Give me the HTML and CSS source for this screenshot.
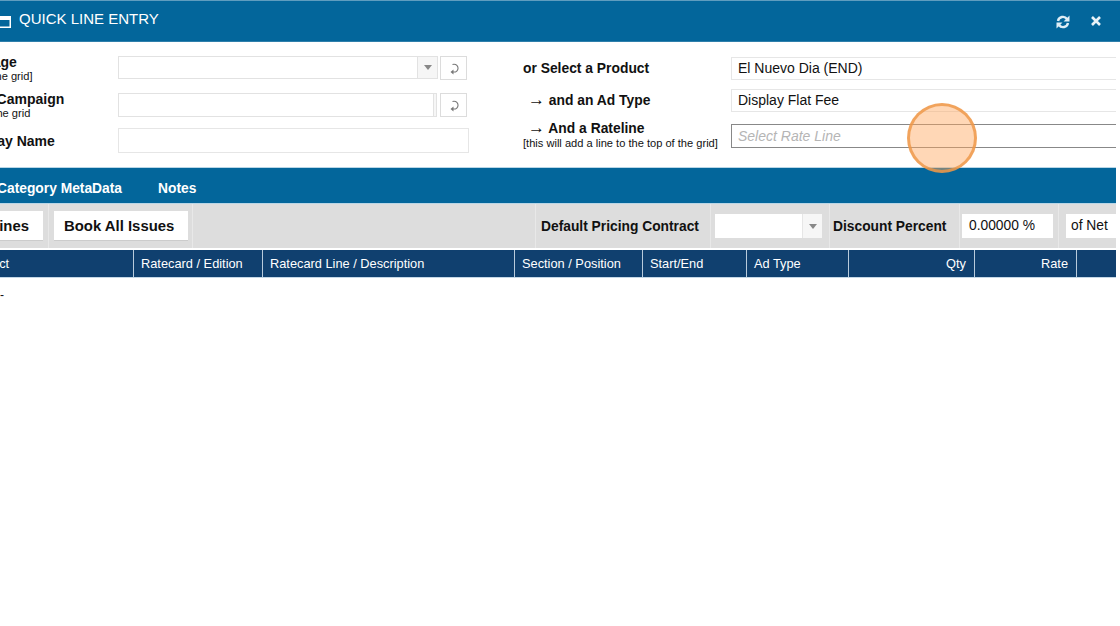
FILE: index.html
```html
<!DOCTYPE html>
<html lang="en">
<head>
<meta charset="utf-8">
<title>Quick Line Entry</title>
<link rel="stylesheet" href="styles.css">
</head>
<body>
<div class="window">
  <header class="titlebar">
    <svg class="win-icon" width="14" height="12" viewBox="0 0 14 12"><path fill="#fff" fill-rule="evenodd" d="M0 0h14v12H0zM1.500 4v6.500h11V4z"/></svg>
    <span class="title">QUICK LINE ENTRY</span>
    <span class="spacer"></span>
    <svg class="tool-refresh" width="14" height="14" viewBox="0 0 14 14"><path fill="none" stroke="#dfeef6" stroke-width="2.400" d="M2 6a5 5 0 0 1 9-2M12 8a5 5 0 0 1-9 2"/><path fill="#dfeef6" d="M13.500 .5v6h-6zM.5 13.500v-6h6z"/></svg>
    <svg class="tool-close" width="10" height="10" viewBox="0 0 10 10"><path stroke="#e8f2f8" stroke-width="2.600" d="M1 1l8 8M9 1l-8 8"/></svg>
  </header>

  <div class="panel">
    <section class="form">
      <div class="form-left">
        <div class="form-row row-one">
          <div class="label lab-package"><b>Package</b><small>[to the grid]</small></div>
          <div class="combo"><span class="combo-arrow"><i class="caret"></i></span></div>
          <button class="mini-btn"><svg width="12" height="13" viewBox="0 0 12 13"><path fill="none" stroke="#777" stroke-width="1.100" d="M3.500 2.500A4 4 0 1 1 6.500 10H4"/><path fill="#777" d="M4.500 7.500v5L1.500 10z"/></svg></button>
        </div>
        <div class="form-row row-two">
          <div class="label lab-campaign"><b>or a Campaign</b><small>to the grid</small></div>
          <div class="combo combo-plain"><span class="combo-edge"></span></div>
          <button class="mini-btn"><svg width="12" height="13" viewBox="0 0 12 13"><path fill="none" stroke="#777" stroke-width="1.100" d="M3.500 2.500A4 4 0 1 1 6.500 10H4"/><path fill="#777" d="M4.500 7.500v5L1.500 10z"/></svg></button>
        </div>
        <div class="form-row row-three">
          <div class="label lab-display"><b>Display Name</b></div>
          <div class="text-field"></div>
        </div>
      </div>
      <div class="form-right">
        <div class="pick-row pick-one">
          <div class="pick-label"><b>or Select a Product</b></div>
          <div class="pick-field">El Nuevo Dia (END)</div>
        </div>
        <div class="pick-row pick-two">
          <div class="pick-label"><b class="indent"><span class="arrow">→</span> and an Ad Type</b></div>
          <div class="pick-field">Display Flat Fee</div>
        </div>
        <div class="pick-row pick-three">
          <div class="pick-label"><b class="indent"><span class="arrow">→</span> And a Rateline</b><small>[this will add a line to the top of the grid]</small></div>
          <div class="pick-field is-focus">Select Rate Line</div>
        </div>
      </div>
    </section>

    <nav class="tabs">
      <span class="tab tab-first">Category MetaData</span>
      <span class="tab">Notes</span>
    </nav>

    <section class="toolbar">
      <div class="cell cell-btn"><span class="tool-btn btn-lines">Add Lines</span></div>
      <div class="cell cell-btn2"><span class="tool-btn">Book All Issues</span></div>
      <span class="spacer"></span>
      <div class="cell cell-label"><b>Default Pricing Contract</b></div>
      <div class="cell cell-select"><div class="mini-select"><span class="combo-arrow"><i class="caret"></i></span></div></div>
      <div class="cell cell-discount"><b>Discount Percent</b></div>
      <div class="cell cell-pct"><div class="value-box pct">0.00000 %</div></div>
      <div class="cell cell-net"><div class="value-box net">of Net</div></div>
    </section>

    <div class="thead">
      <div class="th th-first">Product</div>
      <div class="th">Ratecard / Edition</div>
      <div class="th">Ratecard Line / Description</div>
      <div class="th">Section / Position</div>
      <div class="th">Start/End</div>
      <div class="th">Ad Type</div>
      <div class="th right">Qty</div>
      <div class="th right">Rate</div>
      <div class="th"></div>
    </div>
    <div class="empty-row">-</div>
  </div>
</div>
<div class="click-marker"></div>
</body>
</html>
```

FILE: styles.css
```css
* { box-sizing: border-box; }
html, body { margin: 0; height: 626px; overflow: hidden; background: #fff; }
body { font-family: "Liberation Sans", Arial, sans-serif; color: #111; }
b { font-weight: 700; }
small { display: block; font-size: 11.100px; line-height: 12px; white-space: nowrap; }
.spacer { flex: 1; }

.window { width: 1180px; margin-left: -60px; }
.panel { width: 1176px; overflow: hidden; }

.titlebar {
  display: flex; align-items: center; height: 42px;
  background: #03669b; border-top: 1px solid #5f9dbf; border-bottom: 1px solid #2f7fab;
  color: #fff; padding: 0 19px 3px 57px;
}
.win-icon { flex: none; margin-top: 4px; }
.title { font-size: 15px; margin-left: 8px; margin-top: -2px; }
.tool-refresh { margin-top: 5px; }
.tool-close { margin-left: 21px; margin-top: 3px; }

.form { display: flex; height: 126px; background: #fff; border-bottom: 1px solid #b9d6e6; }
.form-left { width: 583px; }
.form-row { display: flex; align-items: flex-start; }
.row-one { margin-top: 14px; height: 23px; }
.row-two { margin-top: 14px; height: 24px; }
.row-three { margin-top: 11px; height: 25px; }

.label { width: 178px; flex: none; font-size: 14px; line-height: 16px; white-space: nowrap; overflow: hidden; }
.label b { display: block; }
.lab-package { padding-left: 20px; margin-top: -2px; }
.lab-package small { padding-left: 17px; }
.lab-campaign { padding-left: 27px; margin-top: -2px; }
.lab-campaign small { padding-left: 14px; }
.lab-display { padding-left: 23px; margin-top: 5px; }

.combo { width: 320px; height: 23px; border: 1px solid #e2e2e2; background: #fff; display: flex; justify-content: flex-end; }
.combo-plain { width: 319px; height: 24px; }
.combo-arrow { width: 20px; background: #f6f6f6; border-left: 1px solid #e2e2e2; display: flex; align-items: center; justify-content: center; }
.combo-edge { width: 3px; border-left: 1px solid #e2e2e2; background: #f6f6f6; }
.caret { width: 0; height: 0; border: 4.500px solid transparent; border-top: 5px solid #888; border-bottom: 0; }
.mini-btn { width: 27px; height: 24px; margin-left: 2px; padding: 0 0 0 2px; background: #fff; border: 1px solid #dcdcdc; display: flex; align-items: center; justify-content: center; }
.row-two .mini-btn { margin-left: 3px; }
.text-field { width: 351px; height: 25px; border: 1px solid #e6e6e6; background: #fff; }

.form-right { flex: 1; }
.pick-row { display: flex; }
.pick-one { margin-top: 15px; height: 23px; }
.pick-two { margin-top: 9px; height: 23px; }
.pick-three { margin-top: 12px; height: 24px; }
.pick-label { width: 208px; flex: none; font-size: 13.850px; line-height: 16px; }
.pick-one .pick-label, .pick-two .pick-label { margin-top: 3px; }
.pick-three .pick-label { margin-top: -4px; }
.pick-three small { margin-top: 1px; }
.pick-label b { display: block; }
.indent { padding-left: 5px; }
.arrow { font-size: 17px; font-weight: 400; line-height: 14px; }
.pick-field { flex: 1; font-size: 14px; line-height: 21px; padding-left: 6px; border: 1px solid #e6e6e6; border-right: 0; background: #fff; }
.pick-field.is-focus { border-color: #888; font-style: italic; color: #b5b5b5; line-height: 22px; }

.tabs { display: flex; align-items: center; height: 36px; background: #03669b; border-bottom: 1px solid #b9d6e6; color: #fff; font-size: 13.800px; font-weight: 700; padding-left: 57px; padding-top: 5px; }
.tab + .tab { margin-left: 36px; }

.toolbar { display: flex; height: 46px; background: #dddddd; border-bottom: 2px solid #fff; font-size: 13.800px; }
.cell { display: flex; align-items: center; border-left: 1px solid #e8e8e8; white-space: nowrap; }
.cell-btn { width: 108px; border-left: 0; }
.cell-btn2 { width: 145px; padding-left: 5px; border-right: 1px solid #e8e8e8; }
.tool-btn { display: flex; align-items: center; height: 30px; padding: 0 14px 0 10px; background: #fff; font-size: 14.900px; font-weight: 700; border-bottom: 1px solid #ccc; }
.btn-lines { margin-left: 12px; padding: 0 14px 0 5px; }
.cell-label { width: 175px; padding-left: 5px; }
.cell-select { width: 119px; padding-left: 4px; }
.mini-select { width: 107px; height: 24px; background: #fff; display: flex; justify-content: flex-end; }
.mini-select .combo-arrow { border-left: 1px solid #e6e6e6; }
.cell-discount { width: 130px; padding-left: 3px; }
.cell-pct { width: 99px; padding-left: 2px; }
.cell-net { width: 58px; padding-left: 7px; }
.value-box { height: 24px; background: #fff; font-size: 13.800px; line-height: 24px; padding-left: 7px; }
.pct { width: 91px; }
.net { width: 50px; padding-left: 5px; }

.thead { display: grid; height: 28px; grid-template-columns: 194px 129px 252px 128px 104px 102px 126px 102px 39px; background: #10406f; border-bottom: 1px solid #c4d7e6; }
.th { color: #fff; font-size: 12.800px; line-height: 27px; padding: 0 8px 0 7px; border-right: 1px solid #b8cbdc; white-space: nowrap; }
.th-first { padding-left: 25px; }
.th.right { text-align: right; }
.th:last-child { border-right: 0; }
.empty-row { font-size: 12px; line-height: 16px; padding: 9px 0 0 60px; }

.click-marker { position: absolute; left: 907px; top: 103px; width: 70px; height: 70px; border-radius: 50%; background: rgba(255, 166, 94, .45); border: 3px solid rgba(238, 150, 70, .8); }
```
